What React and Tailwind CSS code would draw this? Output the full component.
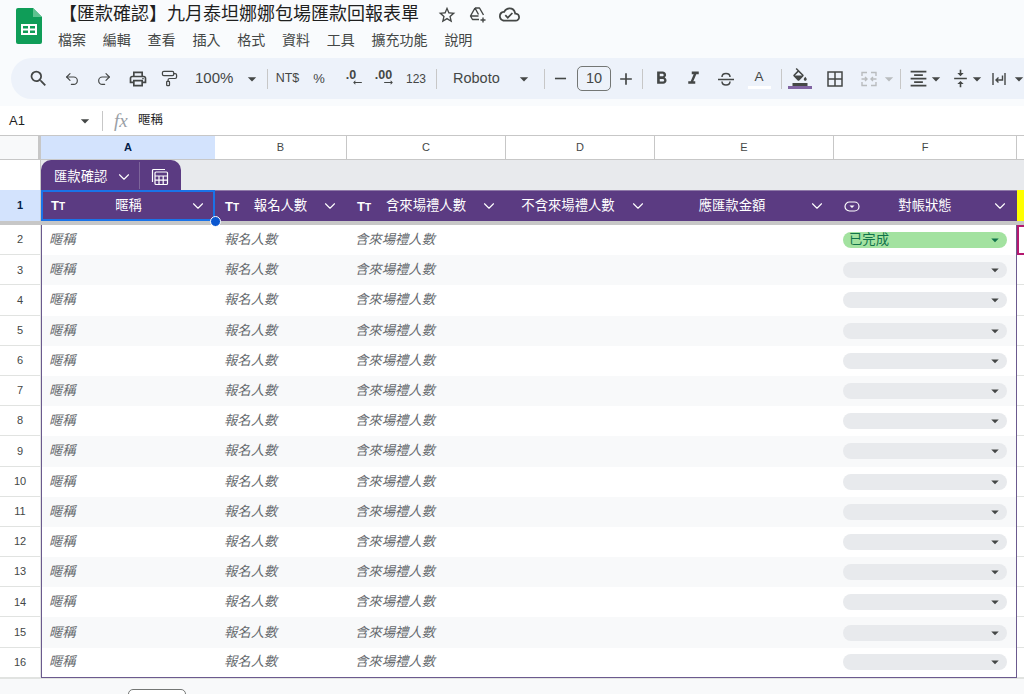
import React from 'react';
import {
  MdSearch, MdOutlineLocalPrintshop, MdArrowDropDown,
  MdRemove, MdAdd, MdFormatBold, MdFormatItalic, MdOutlineFormatColorFill,
  MdFormatAlignCenter, MdVerticalAlignCenter,
  MdStarBorder, MdOutlineCloudDone, MdArrowRightAlt,
} from 'react-icons/md';
import { ChevronDown, Undo2, Redo2, PaintRoller } from 'lucide-react';

const cjk = { fontFamily: '"Liberation Sans", "Noto Sans CJK TC", sans-serif' };
const menus = ['檔案', '編輯', '查看', '插入', '格式', '資料', '工具', '擴充功能', '說明'];
const rows = [2, 3, 4, 5, 6, 7, 8, 9, 10, 11, 12, 13, 14, 15, 16];
const grid = 'grid grid-cols-[41px_174px_132px_159px_149px_179px_183px_7px]';

function SheetsLogo() {
  return (
    <svg width="26" height="36" viewBox="0 0 26 36">
      <path d="M2 0h15l9 9v25a2 2 0 0 1-2 2H2a2 2 0 0 1-2-2V2a2 2 0 0 1 2-2z" fill="#0f9d58" />
      <path d="M17 0l9 9h-9z" fill="#5ec28f" />
      <path d="M5 16h16v11H5z" fill="#fff" />
      <path d="M7 18h5v2.5H7zM14 18h5v2.5h-5zM7 22.500h5V25H7zM14 22.500h5V25h-5z" fill="#0f9d58" />
    </svg>
  );
}

function DriveIcon() {
  return (
    <svg width="20" height="20" viewBox="0 0 20 20" fill="none" stroke="currentColor" strokeWidth="1.400" strokeLinejoin="round">
      <path d="M7 3h4.500l4 7M7 3L2.500 11l2 3.500h6.500M7 3l3.500 6.500M2.500 11h8" />
      <path d="M15 12.500v5M12.500 15h5" />
    </svg>
  );
}

function BordersIcon() {
  return (
    <svg width="18" height="18" viewBox="0 0 18 18" fill="none" stroke="currentColor" strokeWidth="1.500">
      <rect x="2" y="2" width="14" height="14" />
      <path d="M9 2v14M2 9h14" />
    </svg>
  );
}

function MergeIcon() {
  return (
    <svg width="18" height="18" viewBox="0 0 18 18" fill="none" stroke="#b9bcbe" strokeWidth="1.400">
      <path d="M2 6V2.500h5M11 2.500h5V6M2 12v3.500h5M11 15.500h5V12" />
      <path d="M1.500 9h5M5 7l2 2-2 2M16.500 9h-5M13 7l-2 2 2 2" />
    </svg>
  );
}

function WrapIcon() {
  return (
    <svg width="16" height="18" viewBox="0 0 16 18" fill="none" stroke="currentColor" strokeWidth="1.400">
      <path d="M2 3v12M14 3v12M11.500 5.500v4.500H5.500M7.500 7.500L5 10l2.500 2.500" />
    </svg>
  );
}

function StrikeIcon() {
  return (
    <svg width="18" height="18" viewBox="0 0 18 18" fill="none" stroke="currentColor" strokeWidth="1.500">
      <path d="M5 7c0-2 1.500-3.500 4-3.500s4 1.500 4 3.500M1 9.500h16M13 11.500c0 2-1.500 3.500-4 3.500s-4-1.500-4-3.500" />
    </svg>
  );
}

function Sep({ className = '' }) {
  return <div className={`w-px h-[20px] bg-[#c7c7c7] shrink-0 ${className}`} />;
}

function Drop({ className = '' }) {
  return <MdArrowDropDown size={20} className={`shrink-0 text-[#444746] ${className}`} />;
}

function Slot({ w, children }) {
  return <div className={`flex items-center justify-center shrink-0 ${w}`}>{children}</div>;
}

function Toolbar() {
  return (
    <div className="ml-[11px] mr-[-20px] h-[41px] rounded-full bg-[#edf2fa] flex items-center pl-[11px] text-[#444746] shrink-0">
      <Slot w="w-[33px]"><MdSearch size={21} /></Slot>
      <Slot w="w-[33px]"><Undo2 size={16} strokeWidth={1.750} /></Slot>
      <Slot w="w-[32px]"><Redo2 size={16} strokeWidth={1.750} /></Slot>
      <Slot w="w-[35px]"><MdOutlineLocalPrintshop size={20} /></Slot>
      <Slot w="w-[28px]"><PaintRoller size={17} strokeWidth={1.750} /></Slot>
      <div className="w-[45px] ml-[12px] text-[15px] shrink-0">100%</div>
      <Slot w="w-[24px]"><Drop /></Slot>
      <Sep className="ml-[3px]" />
      <Slot w="w-[39px]"><span className="text-[12.500px]">NT$</span></Slot>
      <Slot w="w-[24px]"><span className="text-[13px]">%</span></Slot>
      <Slot w="w-[40px]">
        <span className="relative text-[12.500px] font-bold -mt-[6px]">.0
          <MdArrowRightAlt size={13} className="absolute left-[5px] top-[10px] rotate-180" />
        </span>
      </Slot>
      <Slot w="w-[25px]">
        <span className="relative text-[12.500px] font-bold -mt-[6px]">.00
          <MdArrowRightAlt size={13} className="absolute left-[7px] top-[10px]" />
        </span>
      </Slot>
      <Slot w="w-[40px]"><span className="text-[12px]">123</span></Slot>
      <Sep />
      <div className="w-[48px] ml-[16px] text-[14.500px] shrink-0">Roboto</div>
      <Slot w="w-[43px] pl-[3px]"><Drop /></Slot>
      <Sep />
      <Slot w="w-[31px]"><MdRemove size={19} /></Slot>
      <div className="w-[34px] h-[25px] ml-[1px] border border-[#747775] rounded-[5px] flex items-center justify-center text-[14.500px] shrink-0">10</div>
      <Slot w="w-[30px]"><MdAdd size={20} /></Slot>
      <Sep className="ml-[1px]" />
      <Slot w="w-[36px]"><MdFormatBold size={21} /></Slot>
      <Slot w="w-[28px]"><MdFormatItalic size={21} /></Slot>
      <Slot w="w-[38px]"><StrikeIcon /></Slot>
      <Slot w="w-[28px]">
        <span className="flex flex-col items-center w-[24px]">
          <span className="text-[13.500px] leading-[16px] mt-[1px]">A</span>
          <span className="w-[23px] h-[3px] bg-white mt-[1px]" />
        </span>
      </Slot>
      <Sep className="ml-[8px]" />
      <Slot w="w-[36px]">
        <span className="flex flex-col items-center">
          <MdOutlineFormatColorFill size={18} />
          <span className="w-[24px] h-[3px] bg-[#8064a2]" />
        </span>
      </Slot>
      <Slot w="w-[34px]"><BordersIcon /></Slot>
      <Slot w="w-[34px]"><MergeIcon /></Slot>
      <Slot w="w-[6px]"><Drop className="text-[#b9bcbe]" /></Slot>
      <Sep className="ml-[8px]" />
      <Slot w="w-[34px]"><MdFormatAlignCenter size={21} /></Slot>
      <Slot w="w-[2px]"><Drop /></Slot>
      <Slot w="w-[30px] ml-[8px]"><MdVerticalAlignCenter size={19} /></Slot>
      <Slot w="w-[4px]"><Drop /></Slot>
      <Slot w="w-[40px]"><WrapIcon /></Slot>
      <Slot w="w-[0px]"><Drop /></Slot>
    </div>
  );
}

function HeaderCell({ label, icon, extra = 'pr-[2px] border-t border-[#8f7aa8]' }) {
  return (
    <div className={`h-[31px] flex items-center bg-[#5b3b82] text-white text-[13.330px] ${icon ? 'pl-[10px]' : 'pl-[7px]'} ${extra}`}>
      {icon && <span className="w-[21px] shrink-0 flex items-center">{icon}</span>}
      <span className="flex-1 text-center truncate">{label}</span>
      <span className="w-[30px] shrink-0 flex justify-center"><ChevronDown size={18} strokeWidth={1.500} /></span>
    </div>
  );
}

function TextIcon({ className = '' }) {
  return (
    <span className={`flex items-baseline font-bold text-white leading-none ${className}`}>
      <span className="text-[13px]">T</span>
      <span className="text-[10px]">T</span>
    </span>
  );
}

function ChipIcon() {
  return (
    <svg width="16" height="11" viewBox="0 0 16 11" fill="none">
      <rect x="1" y="1" width="14" height="9" rx="4.500" stroke="white" strokeWidth="1.200" />
      <path d="M5.500 4.500h5L8 7z" fill="white" />
    </svg>
  );
}

function Chip({ done }) {
  return (
    <div className={`h-[16px] w-[164px] rounded-full flex items-center justify-between pl-[6px] pr-[3px] text-[13.330px] ${done ? 'bg-[#a3e2a0] text-[#11734b]' : 'bg-[#e8eaed] text-[#444746]'}`}>
      <span>{done ? '已完成' : ''}</span>
      <MdArrowDropDown size={18} />
    </div>
  );
}

export default function App() {
  return (
    <div style={cjk} className="w-[1024px] h-[694px] overflow-hidden bg-[#f9fbfd] flex flex-col text-[#1f1f1f]">
      <div className="h-[58px] flex shrink-0">
        <div className="pl-[16px] pt-[8px] w-[59px] shrink-0"><SheetsLogo /></div>
        <div className="flex flex-col pt-[2px]">
          <div className="flex items-center h-[25px]">
            <span className="text-[18px] whitespace-nowrap">【匯款確認】九月泰坦娜娜包場匯款回報表單</span>
            <div className="flex items-center gap-[11px] ml-[18px] text-[#444746]">
              <MdStarBorder size={20} />
              <DriveIcon />
              <MdOutlineCloudDone size={21} />
            </div>
          </div>
          <div className="flex gap-[16.800px] text-[14px] text-[#444746] mt-[3px] -ml-[1px]">
            {menus.map((m) => <span key={m}>{m}</span>)}
          </div>
        </div>
      </div>

      <Toolbar />
      <div className="h-[7px] shrink-0" />

      <div className="h-[29px] bg-white flex items-center text-[#444746] shrink-0">
        <span className="w-[75px] pl-[9px] text-[13px] text-[#1f1f1f] shrink-0">A1</span>
        <Drop className="mr-[7px]" />
        <Sep className="h-[17px]" />
        <span className="ml-[11px] w-[24px] italic text-[19px] leading-none text-[#9aa0a6]" style={{ fontFamily: '"Liberation Serif", serif' }}>fx</span>
        <span className="text-[12.500px] text-[#1f1f1f]">暱稱</span>
      </div>

      <div className={`${grid} h-[25px] bg-white border-t border-b border-[#c7c7c7] text-[11px] text-[#444746] shrink-0`}>
        <div className="bg-[#f8f9fa] border-r-[3px] border-[#c7c7c7]" />
        <div className="bg-[#d3e3fd] flex items-center justify-center font-bold text-[#041e49]">A</div>
        {['B', 'C', 'D', 'E', 'F'].map((c) => (
          <div key={c} className="flex items-center justify-center border-r border-[#c7c7c7]">{c}</div>
        ))}
        <div />
      </div>

      <div className="flex h-[30px] shrink-0 bg-[#e8eaed]">
        <div className="w-[41px] bg-white border-r border-[#c7c7c7] shrink-0" />
        <div className="w-[140px] bg-[#5b3b82] rounded-t-[10px] flex items-center text-white text-[13.330px] pl-[13px] pt-[3px] shrink-0">
          <span>匯款確認</span>
          <ChevronDown size={18} strokeWidth={1.500} className="ml-[8px]" />
          <div className="w-px h-full bg-[#7d659b] ml-[6px] -mt-[3px]" />
          <svg width="20" height="20" viewBox="0 0 20 20" fill="none" stroke="white" strokeWidth="1.200" className="ml-[10px]">
            <path d="M2.500 15V3.500a1 1 0 0 1 1-1H15" />
            <rect x="5" y="5" width="12.500" height="12.500" rx="1" />
            <path d="M5 9h12.500M9 9v8.500M13.200 9v8.500M5 13.200h12.500" />
          </svg>
        </div>
      </div>

      <div className={`${grid} relative shrink-0 bg-white`}>
        <div className="h-[31px] bg-[#d3e3fd] flex items-center justify-center font-bold text-[11px] text-[#041e49] border-r border-[#c7c7c7]">1</div>
        <HeaderCell label="暱稱" icon={<TextIcon className="-ml-[2px]" />} extra="border-2 border-[#1a73e8]" />
        <HeaderCell label="報名人數" icon={<TextIcon />} />
        <HeaderCell label="含來場禮人數" icon={<TextIcon />} />
        <HeaderCell label="不含來場禮人數" />
        <HeaderCell label="應匯款金額" />
        <HeaderCell label="對帳狀態" icon={<ChipIcon />} />
        <div className="bg-[#ffff00]" />
        <div className="absolute left-[210px] top-[26px] w-[11px] h-[11px] rounded-full bg-[#0b57d0] border border-white z-10" />
      </div>

      <div className="h-[4px] bg-[#c7c7c7] shrink-0" />

      <div className="shrink-0 bg-white">
        {rows.map((r) => (
          <div key={r} className={`${grid} h-[30.200px]`}>
            <div className="flex items-center justify-center text-[11px] text-[#444746] border-r border-b border-[#e1e3e1]">{r}</div>
            <div className={`col-span-6 grid grid-cols-[174px_132px_159px_149px_179px_182px] border-x border-[#6b5a8e] ${r === 16 ? 'border-b' : ''} ${r % 2 === 1 ? 'bg-[#f8f9fa]' : 'bg-white'} items-center text-[13.330px] italic text-[#666a6e]`}>
              <span className="pl-[7px]">暱稱</span>
              <span className="pl-[8px]">報名人數</span>
              <span className="pl-[7px]">含來場禮人數</span>
              <span />
              <span />
              <div className="pl-[8px] not-italic"><Chip done={r === 2} /></div>
            </div>
            <div className={r === 2 ? 'border-2 border-[#b5186f] border-r-0' : 'border-b border-[#e1e3e1]'} />
          </div>
        ))}
      </div>

      <div className="flex-1 bg-[#f8f9fa] pl-[128px] pt-[10px] border-t border-[#e1e3e1]">
        <div className="w-[58px] h-[20px] bg-white border border-[#747775] rounded-[5px]" />
      </div>
    </div>
  );
}
